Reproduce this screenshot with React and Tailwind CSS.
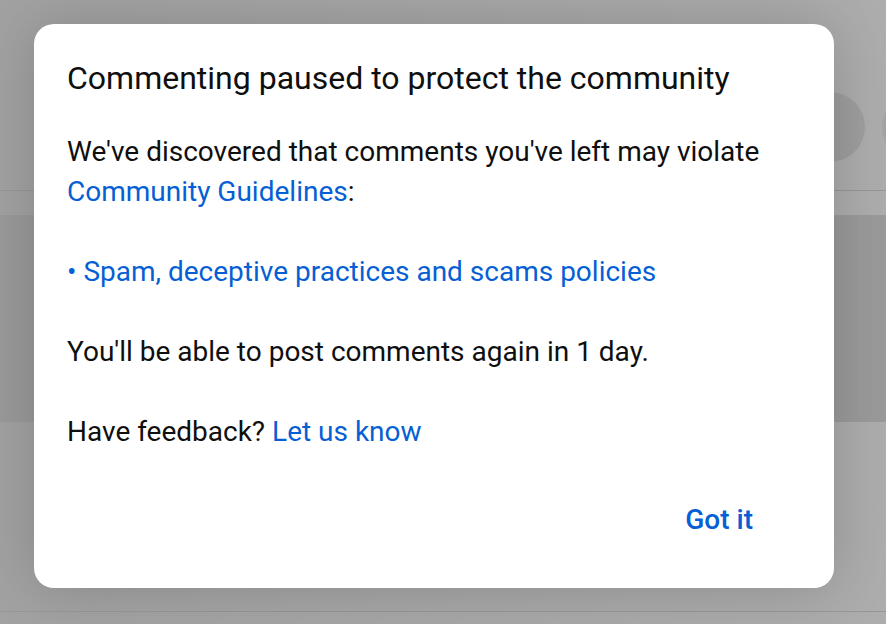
import React from 'react';

export default function App() {
  return (
    <div className="relative w-[886px] h-[624px] overflow-hidden bg-[#aaaaaa]" style={{ fontFamily: 'Roboto, "Noto Sans", sans-serif' }}>
      {/* dimmed page behind the dialog */}
      <div className="flex flex-col h-full bg-gradient-to-r from-[#a2a2a2] to-[#adadad]">
        <div className="h-[190px] flex items-start gap-[17px] pt-[92px] pl-[795px]">
          <div className="shrink-0 w-[70px] h-[70px] rounded-full bg-[#9e9e9e]" />
          <div className="shrink-0 w-[70px] h-[70px] rounded-full bg-[#a4a4a4]" />
        </div>
        <div className="h-px bg-[#969696]" />
        <div className="h-[24px]" />
        <div className="h-[207px] bg-[#9a9a9a]" />
        <div className="h-[189px]" />
        <div className="h-px bg-[#969696]" />
        <div className="flex-1" />
      </div>

      {/* dialog */}
      <div className="absolute left-[34px] top-[24px] w-[800px] h-[564px] bg-white rounded-[20px] shadow-[0_0_60px_rgba(0,0,0,0.18)] px-[33px] pt-[32px] pb-[32px] flex flex-col">
        <h2 className="text-[32px] leading-[44px] text-[#0f0f0f] font-normal">
          Commenting paused to protect the community
        </h2>
        <div className="mt-[32px] text-[28px] leading-[40px] text-[#0f0f0f] flex flex-col gap-[40px]">
          <p>
            We've discovered that comments you've left may violate{' '}
            <span className="text-[#065fd4]">Community Guidelines</span>:
          </p>
          <p className="text-[#065fd4]">• Spam, deceptive practices and scams policies</p>
          <p>You'll be able to post comments again in 1 day.</p>
          <p>
            Have feedback? <span className="text-[#065fd4]">Let us know</span>
          </p>
        </div>
        <div className="mt-auto flex justify-end pr-[16px]">
          <button className="h-[72px] px-[32px] rounded-full text-[28px] font-medium text-[#065fd4]">
            Got it
          </button>
        </div>
      </div>
    </div>
  );
}
